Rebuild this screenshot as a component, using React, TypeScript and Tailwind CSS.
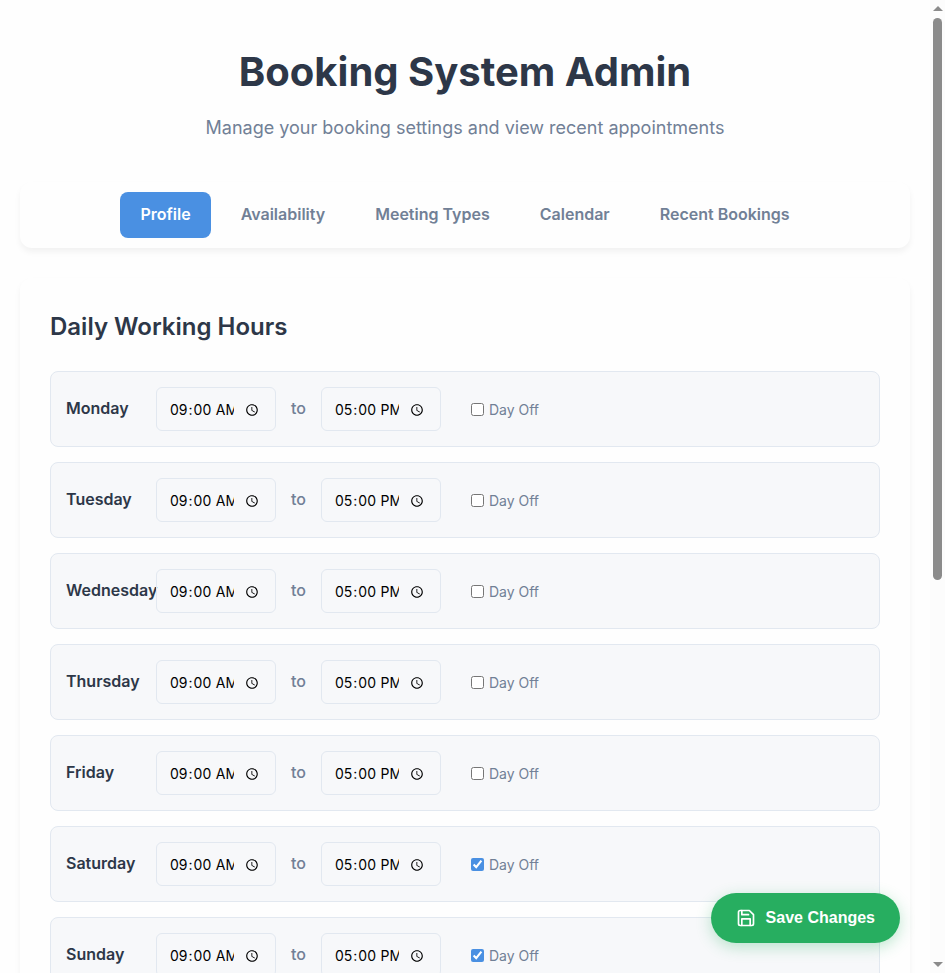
import { useState } from "react";

const tabs = ["Profile", "Availability", "Meeting Types", "Calendar", "Recent Bookings"];

const week = [
  { day: "Monday", off: false },
  { day: "Tuesday", off: false },
  { day: "Wednesday", off: false },
  { day: "Thursday", off: false },
  { day: "Friday", off: false },
  { day: "Saturday", off: true },
  { day: "Sunday", off: true },
];

function TimeInput({ label, value }: { label: string; value: string }) {
  return (
    <input
      type="time"
      aria-label={label}
      defaultValue={value}
      className="h-11 w-[120px] shrink-0 rounded-md border border-[#e2e8f0] px-3 pt-0.5 text-[14px] text-black"
    />
  );
}

function DayRow({ day, off }: { day: string; off: boolean }) {
  return (
    <div className="flex items-center gap-[15px] rounded-lg border border-[#e2e8f0] bg-[#f7f8fa] p-[15px]">
      <span className="w-[75px] shrink-0 pb-0.5 font-semibold text-[#2d3748]">{day}</span>
      <TimeInput label={`${day} start time`} value="09:00" />
      <span className="pb-0.5 font-medium text-[#718096]">to</span>
      <TimeInput label={`${day} end time`} value="17:00" />
      <label className="ml-[15px] flex items-center gap-[5px] text-[14px] text-[#718096]">
        <input type="checkbox" defaultChecked={off} className="size-[13px] accent-[#4a90e2]" />
        <span className="pt-0.5">Day Off</span>
      </label>
    </div>
  );
}

function SaveIcon() {
  return (
    <svg
      viewBox="0 0 24 24"
      fill="none"
      stroke="currentColor"
      strokeWidth="2"
      strokeLinecap="round"
      strokeLinejoin="round"
      className="size-5"
      aria-hidden="true"
    >
      <path d="M19 21H5a2 2 0 0 1-2-2V5a2 2 0 0 1 2-2h11l5 5v11a2 2 0 0 1-2 2z" />
      <path d="M17 21v-8H7v8" />
      <path d="M7 3v5h8" />
    </svg>
  );
}

function ScrollTrack() {
  return (
    <div className="flex w-[15px] shrink-0 flex-col items-center justify-between bg-[#fcfcfc] py-1.5" aria-hidden="true">
      <div className="flex w-full grow flex-col items-center gap-[7px]">
        <svg viewBox="0 0 10 5" className="h-[5px] w-[10px]">
          <path d="M5 0l5 5H0z" fill="#8b8b8b" />
        </svg>
        <div className="h-[58.8%] w-[9px] rounded-full bg-[#8b8b8b]" />
      </div>
      <svg viewBox="0 0 10 5" className="h-[5px] w-[10px]">
        <path d="M0 0h10L5 5z" fill="#8b8b8b" />
      </svg>
    </div>
  );
}

export default function App() {
  const [active, setActive] = useState("Profile");
  return (
    <div className="flex h-screen bg-[#fefefe] font-['Inter',sans-serif] text-[16px] leading-[26px]">
      <div className="relative min-w-0 grow">
        <main className="h-full overflow-y-auto px-5 py-5 [scrollbar-width:none]">
          <header className="mb-10 pt-5 text-center">
            <h1 className="mb-2.5 text-[40px] leading-[64px] font-bold text-[#2d3748]">Booking System Admin</h1>
            <p className="text-[18px] leading-7 text-[#718096]">
              Manage your booking settings and view recent appointments
            </p>
          </header>

          <nav className="mb-[30px] flex justify-center gap-2.5 rounded-xl bg-[#fefefe] p-2.5 shadow-[0_4px_6px_rgba(0,0,0,0.05)]">
            {tabs.map((tab) => (
              <button
                key={tab}
                type="button"
                onClick={() => setActive(tab)}
                className={
                  tab === active
                    ? "rounded-lg bg-[#4a90e2] px-5 pt-[9px] pb-[11px] font-semibold text-white"
                    : "rounded-lg px-5 pt-[9px] pb-[11px] font-semibold text-[#718096]"
                }
              >
                {tab}
              </button>
            ))}
          </nav>

          <section className="rounded-xl bg-[#fefefe] p-[30px] shadow-[0_4px_6px_rgba(0,0,0,0.05)]">
            <h2 className="mb-[25px] text-[24px] leading-[38px] font-semibold text-[#2d3748]">Daily Working Hours</h2>
            <div className="flex flex-col gap-[15px]">
              {week.map((row) => (
                <DayRow key={row.day} day={row.day} off={row.off} />
              ))}
            </div>
          </section>
        </main>

        <button
          type="button"
          className="absolute right-[30px] bottom-[30px] flex h-[50px] items-center gap-2.5 rounded-full bg-[#27ae60] px-[25px] font-['Liberation_Sans',sans-serif] font-semibold text-white shadow-[0_4px_15px_rgba(39,174,96,0.3)]"
        >
          <SaveIcon />
          Save Changes
        </button>
      </div>
      <ScrollTrack />
    </div>
  );
}
